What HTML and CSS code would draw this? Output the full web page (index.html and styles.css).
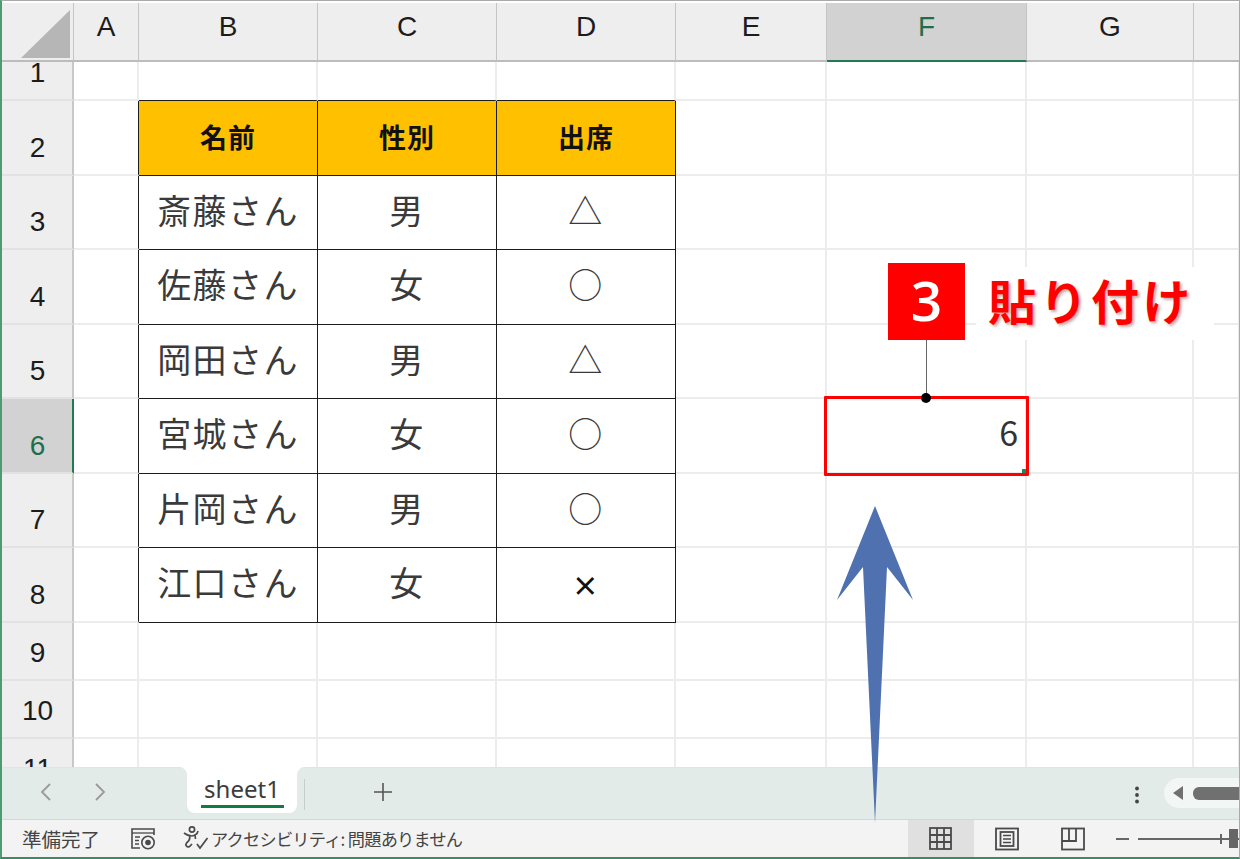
FILE: index.html
```html
<!DOCTYPE html>
<html lang="ja">
<head>
<meta charset="utf-8">
<title>sheet1</title>
<link rel="stylesheet" href="styles.css">
</head>
<body>
<div class="window">
  <div class="sheet">
    <div class="corner"><svg class="corner-tri" width="72" height="59" viewBox="0 0 72 59"><polygon points="21,55 70,55 70,7" fill="#b6b6b6"/></svg></div>
    <div class="ch">A</div><div class="ch">B</div><div class="ch">C</div><div class="ch">D</div><div class="ch">E</div><div class="ch sel">F</div><div class="ch">G</div><div class="ch"></div>

    <div class="rh">1</div><div class="c"></div><div class="c ct"></div><div class="c ct"></div><div class="c ct"></div><div class="c"></div><div class="c"></div><div class="c"></div><div class="c"></div>
    <div class="rh">2</div><div class="c cl"></div><div class="t th">名前</div><div class="t th">性別</div><div class="t th">出席</div><div class="c"></div><div class="c"></div><div class="c"></div><div class="c"></div>
    <div class="rh">3</div><div class="c cl"></div><div class="t">斎藤さん</div><div class="t">男</div><div class="t">△</div><div class="c"></div><div class="c"></div><div class="c"></div><div class="c"></div>
    <div class="rh">4</div><div class="c cl"></div><div class="t">佐藤さん</div><div class="t">女</div><div class="t">○</div><div class="c"></div><div class="c"></div><div class="c"></div><div class="c"></div>
    <div class="rh">5</div><div class="c cl"></div><div class="t">岡田さん</div><div class="t">男</div><div class="t">△</div><div class="c"></div><div class="c"></div><div class="c"></div><div class="c"></div>
    <div class="rh sel-r">6</div><div class="c cl"></div><div class="t">宮城さん</div><div class="t">女</div><div class="t">○</div><div class="c"></div><div class="c num">6</div><div class="c"></div><div class="c"></div>
    <div class="rh">7</div><div class="c cl"></div><div class="t">片岡さん</div><div class="t">男</div><div class="t">○</div><div class="c"></div><div class="c"></div><div class="c"></div><div class="c"></div>
    <div class="rh">8</div><div class="c cl"></div><div class="t">江口さん</div><div class="t">女</div><div class="t x">×</div><div class="c"></div><div class="c"></div><div class="c"></div><div class="c"></div>
    <div class="rh">9</div><div class="c"></div><div class="c"></div><div class="c"></div><div class="c"></div><div class="c"></div><div class="c"></div><div class="c"></div><div class="c"></div>
    <div class="rh">10</div><div class="c"></div><div class="c"></div><div class="c"></div><div class="c"></div><div class="c"></div><div class="c"></div><div class="c"></div><div class="c"></div>
    <div class="rh">11</div><div class="c"></div><div class="c"></div><div class="c"></div><div class="c"></div><div class="c"></div><div class="c"></div><div class="c"></div><div class="c"></div>
  </div>

  <div class="tabbar">
    <div class="nav">
      <svg width="12" height="20" viewBox="0 0 12 20"><path d="M10 2 L2 10 L10 18" fill="none" stroke="#9a9a9a" stroke-width="1.8"/></svg>
      <svg width="12" height="20" viewBox="0 0 12 20"><path d="M2 2 L10 10 L2 18" fill="none" stroke="#9a9a9a" stroke-width="1.8"/></svg>
    </div>
    <div class="tab"><span class="tab-label">sheet1</span></div>
    <div class="tab-sep"></div>
    <svg class="plus" width="20" height="20" viewBox="0 0 20 20"><path d="M10 1 V19 M1 10 H19" stroke="#555" stroke-width="1.6"/></svg>
    <div class="spacer"></div>
    <svg class="dots" width="6" height="18" viewBox="0 0 6 18"><circle cx="3" cy="2.5" r="1.9" fill="#444"/><circle cx="3" cy="9" r="1.9" fill="#444"/><circle cx="3" cy="15.5" r="1.9" fill="#444"/></svg>
    <div class="scroll">
      <svg width="12" height="14" viewBox="0 0 12 14"><polygon points="11,0 11,14 1,7" fill="#707070"/></svg>
      <div class="thumb"></div>
    </div>
  </div>

  <div class="status">
    <span class="st-ready">準備完了</span>
    <svg class="st-macro" width="26" height="23" viewBox="0 0 26 23" fill="none" stroke="#4a4a4a" stroke-width="1.6">
      <path d="M10 21 H2 V2 H24 V8"/><path d="M2 6 H24" stroke-width="1.3"/><path d="M5 10 H10 M5 13.5 H9 M5 17 H9" stroke-width="1.3"/>
      <circle cx="18" cy="15.5" r="6.2"/><circle cx="18" cy="15.5" r="2.8" fill="#4a4a4a" stroke="none"/>
    </svg>
    <svg class="st-acc" width="26" height="24" viewBox="0 0 26 24" fill="none" stroke="#4a4a4a" stroke-width="1.7">
      <circle cx="9" cy="3.5" r="2.6"/><path d="M1 7 C4 9.5 6 10 9 10 C11 10 12 9 14 7.5 L15 5"/><path d="M6.5 10 C7.5 13 6 15 3.5 17 C2 19 4 22 6.5 20.5 L9 18"/><path d="M12 9 L12.5 13"/><path d="M14 18 L17 22 L24.5 12"/>
    </svg>
    <span class="st-acc-text">アクセシビリティ: 問題ありません</span>
    <div class="spacer"></div>
    <div class="view active"><svg class="grid-ic" width="23" height="23" viewBox="0 0 23 23" fill="none" stroke="#4a4a4a" stroke-width="1.8"><rect x="1" y="1" width="21" height="21"/><path d="M8 1 V22 M15 1 V22 M1 8 H22 M1 15 H22"/></svg></div>
    <div class="view"><svg width="24" height="24" viewBox="0 0 24 24" fill="none" stroke="#4a4a4a" stroke-width="1.8"><rect x="1" y="1.5" width="22" height="21"/><rect x="5.5" y="5" width="13" height="14"/><path d="M8 8.5 H16 M8 12 H16 M8 15.5 H16" stroke-width="1.3"/></svg></div>
    <div class="view"><svg width="24" height="24" viewBox="0 0 24 24" fill="none" stroke="#4a4a4a" stroke-width="1.8"><rect x="1" y="1.5" width="22" height="21"/><path d="M1 14 H15 V1.5 M8 1.5 V14"/></svg></div>
    <div class="zoom">
      <div class="minus"></div>
      <div class="slider"><div class="tick"></div><div class="knob"></div></div>
    </div>
  </div>

  <div class="label"><span class="label-text">貼り付け</span></div>
  <div class="badge">3</div>
  <div class="connector"></div>
  <div class="selection"><span class="handle"></span></div>
  <div class="dot"></div>
  <svg class="arrow" width="80" height="320" viewBox="0 0 80 320"><polygon points="40,1 78,95 52,62 40,318 28,62 2,95" fill="#4f71b0"/></svg>
  <div class="frame"></div>
</div>
</body>
</html>
```
FILE: styles.css
```css
* { box-sizing: border-box; }
html, body { margin: 0; padding: 0; background: #fff; }
.window {
  position: relative;
  width: 1240px;
  height: 859px;
  display: flex;
  flex-direction: column;
  overflow: hidden;
  font-family: "Noto Sans CJK JP", "Liberation Sans", sans-serif;
  color: #333;
}
.frame {
  position: absolute;
  inset: 0;
  border-left: 2px solid #4e9a72;
  border-bottom: 2px solid #3f8a64;
  border-top: 1px solid #a9a9a9;
  border-right: 1px solid #a9a9a9;
  pointer-events: none;
}
.sheet {
  flex: 0 0 767px;
  height: 767px;
  overflow: hidden;
  padding-top: 3px;
  display: grid;
  grid-template-columns: 74px 65px 179px 179px 179px 151px 200px 167px 46px;
  grid-template-rows: 59px 39px 75px 74px 75px 74px 75px 74px 75px 58px 58px 58px;
}
.corner {
  background: #eee;
  border-right: 1px solid #c4c4c4;
  border-bottom: 2px solid #bcbcbc;
}
.corner-tri { display: block; }
.ch {
  background: #eee;
  border-right: 1px solid #c4c4c4;
  border-bottom: 2px solid #bcbcbc;
  display: flex;
  align-items: center;
  justify-content: center;
  font: 28px/30px "Liberation Sans", sans-serif;
  color: #1c1c1c;
  padding: 0 0 10px 0;
}
.ch.sel {
  background: #d2d2d2;
  color: #1f6e4a;
  border-bottom-color: #217a50;
}
.rh {
  background: #eee;
  border-right: 2px solid #c8c8c8;
  border-bottom: 2px solid #e2e2e2;
  display: flex;
  align-items: flex-end;
  justify-content: center;
  font: 28px/30px "Liberation Sans", sans-serif;
  color: #1c1c1c;
  padding: 0 0 11px 3px;
}
.rh.sel-r {
  background: #d2d2d2;
  color: #1f6e4a;
  border-right-color: #217a50;
}
.c {
  border-right: 2px solid #ececec;
  border-bottom: 2px solid #ececec;
}
.c.ct { border-bottom: 1px solid #1c1c1c; }
.c.cl { border-right: 1px solid #1c1c1c; }
.num {
  display: flex;
  align-items: center;
  justify-content: flex-end;
  padding: 0 7px 8px 0;
  font-size: 34px;
  line-height: 1;
  color: #333;
  font-weight: 400;
}
.t {
  border-right: 1px solid #1c1c1c;
  border-bottom: 1px solid #1c1c1c;
  display: flex;
  align-items: center;
  justify-content: center;
  padding-bottom: 6px;
  font-size: 34px;
  line-height: 1;
  color: #3a3a3a;
  letter-spacing: 1.4px;
}
.th {
  background: #ffc000;
  color: #111;
  padding-bottom: 4px;
  font-size: 27px;
  font-weight: 700;
  letter-spacing: 1px;
}
.t.x {
  color: #111;
  padding-bottom: 2px;
  font-weight: 700;
  font-size: 27px;
}
.tabbar {
  flex: 0 0 53px;
  background: #e3ebe8;
  display: flex;
  align-items: flex-start;
  position: relative;
  border-bottom: 1px solid #d4d8d6;
  border-top: 1px solid #dfe5e2;
}
.nav {
  width: 187px;
  height: 100%;
  padding: 14px 0 0 40px;
  display: flex;
  gap: 42px;
  align-items: flex-start;
}
.tab {
  position: relative;
  width: 110px;
  height: 46px;
  background: #fff;
  border-radius: 0 0 8px 8px;
  display: flex;
  justify-content: center;
  padding-top: 7px;
  margin-top: -1px;
}
.tab::before,
.tab::after {
  content: "";
  position: absolute;
  top: 0;
  width: 8px;
  height: 8px;
}
.tab::before {
  left: -8px;
  background: radial-gradient(circle at 0 100%, transparent 7.5px, #fff 8.5px);
}
.tab::after {
  right: -8px;
  background: radial-gradient(circle at 100% 100%, transparent 7.5px, #fff 8.5px);
}
.tab-label {
  font: 24px/29px "Noto Sans", sans-serif;
  color: #3c3c3c;
  width: 83px;
  height: 34px;
  text-align: center;
  border-bottom: 3px solid #107c41;
}
.tab-sep {
  width: 1px;
  height: 31px;
  background: #c6ccca;
  margin: 11px 0 0 7px;
}
.plus { margin: 14px 0 0 68px; }
.spacer { flex: 1; }
.dots { margin: 18px 24px 0 0; }
.scroll {
  width: 76px;
  height: 30px;
  margin: 10px 0 0 0;
  background: #f2f6f5;
  border-radius: 15px 0 0 15px;
  display: flex;
  align-items: center;
  padding-left: 8px;
  gap: 9px;
}
.thumb {
  flex: 1;
  height: 13px;
  background: #707070;
  border-radius: 6px 0 0 6px;
}
.status {
  flex: 0 0 39px;
  background: #f3f3f3;
  display: flex;
  align-items: flex-start;
  padding-left: 22px;
  color: #444;
}
.st-ready { font-size: 19.5px; line-height: 37px; }
.st-macro { margin: 7px 0 0 30px; }
.st-acc { margin: 6px 0 0 27px; }
.st-acc-text { font-size: 17.2px; line-height: 37px; margin-left: 2px; letter-spacing: -0.75px; }
.view {
  width: 66px;
  height: 37px;
  display: flex;
  align-items: center;
  justify-content: center;
}
.view.active { background: #e0e0e0; }
.grid-ic { margin-right: 2px; }
.zoom {
  width: 134px;
  height: 37px;
  display: flex;
  align-items: center;
  padding-left: 10px;
  gap: 9px;
}
.minus { width: 13px; height: 2px; background: #666; }
.slider { flex: 1; height: 2px; background: #666; position: relative; }
.tick { position: absolute; left: 82px; top: -4px; width: 2px; height: 10px; background: #666; }
.knob { position: absolute; left: 91px; top: -9px; width: 9px; height: 19px; background: #666; }
.label {
  position: absolute;
  left: 976px;
  top: 267px;
  width: 238px;
  height: 73px;
  background: #fff;
  display: flex;
  align-items: center;
  justify-content: center;
}
.label-text {
  font-size: 48px;
  font-weight: 700;
  line-height: 1;
  letter-spacing: 3.5px;
  color: #f00;
  text-shadow: 2px 2px 3px rgba(90, 0, 0, .35);
  margin: -10px 8px 0 0;
}
.badge {
  position: absolute;
  left: 888px;
  top: 263px;
  width: 77px;
  height: 77px;
  background: #f00;
  color: #fff;
  font: 600 55px/73px "Open Sans", "Liberation Sans", sans-serif;
  text-align: center;
}
.connector {
  position: absolute;
  left: 926px;
  top: 340px;
  width: 1px;
  height: 58px;
  background: #666;
}
.selection {
  position: absolute;
  left: 824px;
  top: 396px;
  width: 205px;
  height: 80px;
  border: 3px solid #f00;
  border-radius: 1px;
}
.handle {
  position: absolute;
  right: 0;
  bottom: 0;
  width: 4px;
  height: 4px;
  background: #1f8a55;
}
.dot {
  position: absolute;
  left: 921px;
  top: 393px;
  width: 10px;
  height: 10px;
  border-radius: 50%;
  background: #000;
}
.arrow {
  position: absolute;
  left: 835px;
  top: 505px;
}
```
